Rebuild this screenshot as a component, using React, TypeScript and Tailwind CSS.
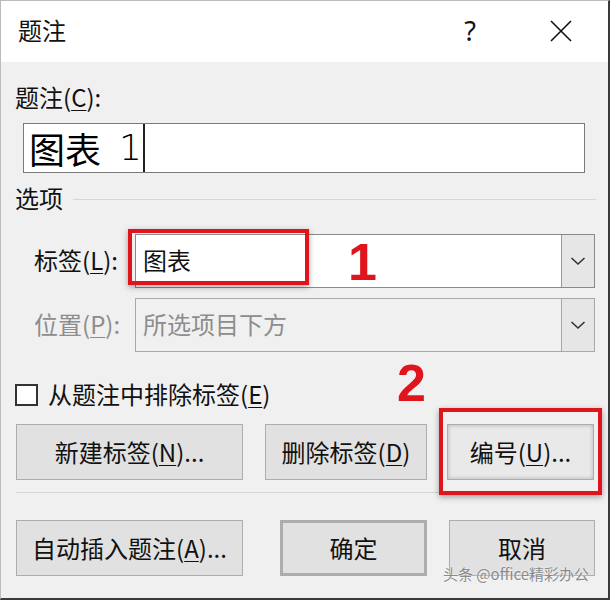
import React from "react";

const font = { fontFamily: '"Noto Sans CJK SC", "Noto Sans", sans-serif' };

function U({ children }: { children: React.ReactNode }) {
  return <span className="underline underline-offset-[3px] decoration-1">{children}</span>;
}

function Chevron({ color = "#333" }: { color?: string }) {
  return (
    <svg width="16" height="10" viewBox="0 0 16 10">
      <path d="M1.5 2 L8 8 L14.5 2" fill="none" stroke={color} strokeWidth="1.6" />
    </svg>
  );
}

function Btn({ w, children, extra = "" }: { w: string; children: React.ReactNode; extra?: string }) {
  return (
    <div
      className={`${w} h-[56px] flex items-center justify-center bg-[#e1e1e1] border border-[#adadad] text-[24px] text-[#111] ${extra}`}
    >
      {children}
    </div>
  );
}

export default function App() {
  return (
    <div className="w-[610px] h-[600px] bg-white" style={font}>
      <div className="relative w-[610px] h-[600px] bg-[#f0f0f0] border-l border-t border-[#bcbcbc] border-r-2 border-r-[#3a3a3a] border-b-2 border-b-[#3a3a3a] overflow-hidden">
        {/* title bar */}
        <div className="h-[61px] bg-white flex items-center text-[24px] text-[#111] leading-none">
          <div className="ml-[17px] -mt-[3px]">题注</div>
          <div className="ml-auto mr-[74px] -mt-[3px] text-[27px]" style={{ fontFamily: '"Noto Sans", sans-serif' }}>?</div>
          <svg width="22" height="22" viewBox="0 0 22 22" className="mr-[36px] -mt-[2px]">
            <path d="M1 1 L21 21 M21 1 L1 21" stroke="#111" strokeWidth="1.6" />
          </svg>
        </div>

        {/* body */}
        <div className="flex flex-col pl-[14px] text-[24px] text-[#111]">
          <div className="mt-[22px] h-[26px] leading-[26px]">
            题注(<U>C</U>):
          </div>

          <div className="mt-[13px] ml-[8px] w-[562px] h-[50px] bg-white border border-[#7a7a7a] flex items-stretch">
            <div className="flex items-center pl-[5px] text-[36px] leading-none text-black">
              <span>图表</span>
              <span className="ml-[18px] font-light" style={{ fontFamily: '"DejaVu Sans", sans-serif' }}>1</span>
            </div>
            <div className="ml-[1px] w-[2px] bg-[#222]" />
          </div>

          <div className="mt-[12px] h-[26px] leading-[26px] flex items-center">
            <span>选项</span>
            <div className="ml-[10px] mt-[2px] w-[523px] h-px bg-[#d6d6d6]" />
          </div>

          <div className="mt-[23px] flex items-center">
            <div className="w-[120px] pl-[19px] -mt-[2px]">
              标签(<U>L</U>):
            </div>
            <div className="w-[460px] h-[54px] bg-white border border-[#8a8a8a] flex">
              <div className="flex-1 flex items-center pl-[7px] -mt-[3px]">图表</div>
              <div className="w-[33px] bg-[#e6e6e6] border-l border-[#9a9a9a] flex items-center justify-center">
                <Chevron />
              </div>
            </div>
          </div>

          <div className="mt-[10px] flex items-center text-[#8d8d8d]">
            <div className="w-[120px] pl-[19px] -mt-[2px]">
              位置(<U>P</U>):
            </div>
            <div className="w-[460px] h-[54px] bg-[#f0f0f0] border border-[#a8a8a8] flex">
              <div className="flex-1 flex items-center pl-[7px] -mt-[3px]">所选项目下方</div>
              <div className="w-[33px] bg-[#e6e6e6] border-l border-[#a8a8a8] flex items-center justify-center">
                <Chevron />
              </div>
            </div>
          </div>

          <div className="mt-[32px] h-[22px] flex items-center">
            <div className="w-[23px] h-[22px] bg-white border-2 border-[#333]" />
            <div className="ml-[10px] leading-[26px] -mt-[2px]">
              从题注中排除标签(<U>E</U>)
            </div>
          </div>

          <div className="mt-[18px] flex items-center">
            <Btn w="w-[227px] ml-px">
              新建标签(<U>N</U>)...
            </Btn>
            <Btn w="w-[162px] ml-[22px]">
              删除标签(<U>D</U>)
            </Btn>
            <Btn w="w-[147px] ml-[20px]" extra="bg-[#e9e9e9] shadow-[inset_0_0_4px_rgba(0,0,0,0.25)]">
              编号(<U>U</U>)...
            </Btn>
          </div>

          <div className="mt-[12px] ml-px w-[580px] h-px bg-[#d6d6d6]" />

          <div className="mt-[27px] flex items-center">
            <Btn w="w-[227px] ml-px">
              自动插入题注(<U>A</U>)...
            </Btn>
            <Btn w="w-[147px] ml-[37px]" extra="border-[3px] border-[#0078d7]">
              确定
            </Btn>
            <Btn w="w-[146px] ml-[22px]">取消</Btn>
          </div>
        </div>

        {/* annotations */}
        <div className="absolute left-[127px] top-[228px] w-[181px] h-[56px] border-[4px] border-[#e0141c] shadow-[0_2px_6px_rgba(0,0,0,0.35)]" />
        <div
          className="absolute left-[347px] top-[235px] text-[52px] font-bold text-[#e0141c] leading-none"
          style={{ fontFamily: '"Liberation Sans", Arial, sans-serif' }}
        >
          1
        </div>
        <div
          className="absolute left-[396px] top-[356px] text-[52px] font-bold text-[#e0141c] leading-none"
          style={{ fontFamily: '"Liberation Sans", Arial, sans-serif' }}
        >
          2
        </div>
        <div className="absolute left-[438px] top-[407px] w-[163px] h-[87px] border-[4px] border-[#e0141c] shadow-[0_2px_6px_rgba(0,0,0,0.35)]" />

        <div className="absolute left-[442px] top-[565px] text-[15px] leading-none text-[#8a8a8a] [text-shadow:0_0_2px_#fff]">
          头条 @office精彩办公
        </div>
      </div>
    </div>
  );
}
